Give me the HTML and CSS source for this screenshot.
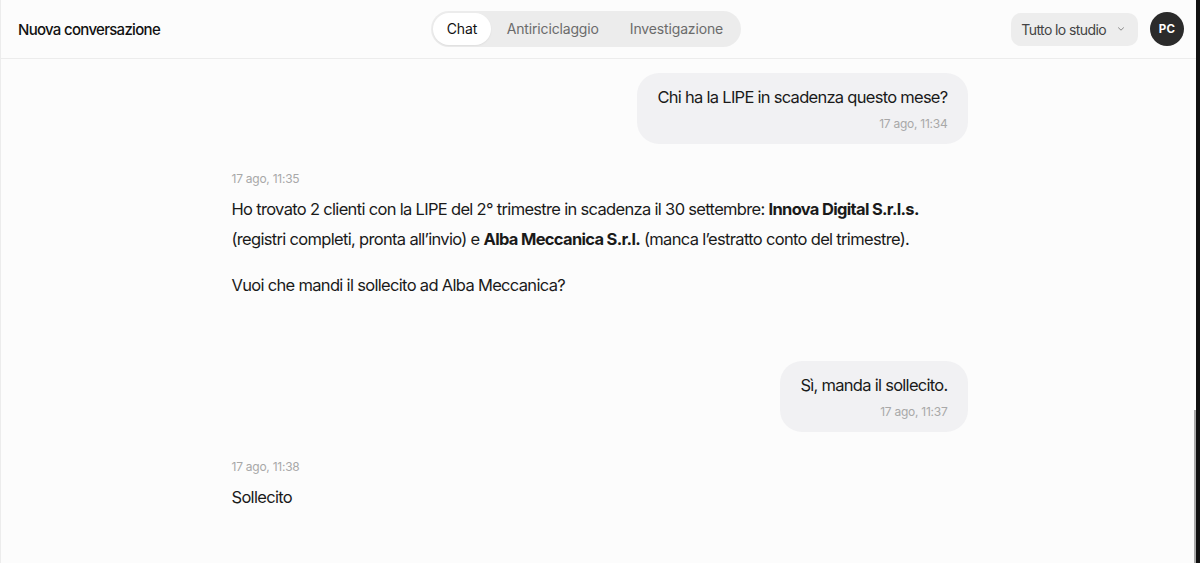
FILE: index.html
```html
<!DOCTYPE html>
<html lang="it">
<head>
<meta charset="utf-8">
<title>Nuova conversazione</title>
<link rel="stylesheet" href="styles.css">
</head>
<body>
<div class="app">
  <header class="topbar">
    <div class="title">Nuova conversazione</div>
    <nav class="tabs">
      <span class="tab active">Chat</span>
      <span class="tab">Antiriciclaggio</span>
      <span class="tab">Investigazione</span>
    </nav>
    <div class="controls">
      <div class="select">
        <span>Tutto lo studio</span>
        <svg class="chev" width="10" height="10" viewBox="0 0 10 10"><path d="M2.5 3.8 5 6.2 7.5 3.8" fill="none" stroke="#888" stroke-width="1" stroke-linecap="round" stroke-linejoin="round"/></svg>
      </div>
      <div class="avatar">PC</div>
    </div>
  </header>
  <main class="thread">
    <div class="column">
      <div class="msg-user">
        <div class="bubble">
          <p class="btext">Chi ha la LIPE in scadenza questo mese?</p>
          <div class="btime">17 ago, 11:34</div>
        </div>
      </div>
      <div class="msg-bot">
        <div class="time">17 ago, 11:35</div>
        <p class="para">Ho trovato 2 clienti con la LIPE del 2° trimestre in scadenza il 30 settembre: <b>Innova Digital S.r.l.s.</b> (registri completi, pronta all’invio) e <b>Alba Meccanica S.r.l.</b> (manca l’estratto conto del trimestre).</p>
        <p class="para">Vuoi che mandi il sollecito ad Alba Meccanica?</p>
      </div>
      <div class="msg-user second">
        <div class="bubble">
          <p class="btext">Sì, manda il sollecito.</p>
          <div class="btime">17 ago, 11:37</div>
        </div>
      </div>
      <div class="msg-bot">
        <div class="time">17 ago, 11:38</div>
        <p class="para">Sollecito</p>
      </div>
    </div>
  </main>
  <div class="thumb"></div>
</div>
<div class="edge"></div>
</body>
</html>
```
FILE: styles.css
```css
* { box-sizing: border-box; }
html, body { margin: 0; padding: 0; height: 100%; }
body {
  display: flex;
  background: #fcfcfc;
  font-family: "Inter", "Liberation Sans", sans-serif;
  color: #1a1a1a;
  overflow: hidden;
}
.app {
  position: relative;
  flex: 1;
  border-left: 1px solid #ececec;
  display: flex;
  flex-direction: column;
  min-width: 0;
}
.edge {
  width: 4px;
  background: #111;
  flex: none;
}
.thumb {
  position: absolute;
  right: 0;
  top: 410px;
  bottom: 0;
  width: 2px;
  background: #a9a9a9;
}
.topbar {
  height: 59px;
  flex: none;
  border-bottom: 1px solid #ececec;
  display: flex;
  align-items: center;
  justify-content: space-between;
  padding: 0 12px 0 17px;
}
.title {
  font-size: 15px;
  font-weight: 500;
  letter-spacing: -0.7px;
  color: #111;
}
.tabs {
  display: flex;
  background: #ececec;
  border-radius: 18px;
  padding: 2px;
  height: 36px;
  margin-top: -1px;
}
.tab {
  display: flex;
  align-items: center;
  padding: 0 15.5px;
  font-size: 14px;
  color: #6b6b6b;
  border-radius: 16px;
  letter-spacing: -0.15px;
}
.tab.active {
  background: #fff;
  color: #111;
  box-shadow: 0 1px 2px rgba(0,0,0,0.06);
  padding: 0 14px;
}
.controls {
  display: flex;
  align-items: center;
  gap: 12px;
}
.select {
  display: flex;
  align-items: center;
  gap: 10px;
  height: 33px;
  padding: 0 12px 0 10px;
  background: #ededed;
  border-radius: 10px;
  font-size: 14px;
  color: #444;
  letter-spacing: -0.6px;
}
.chev { display: block; }
.avatar {
  width: 34px;
  height: 34px;
  border-radius: 50%;
  background: #2b2b2b;
  color: #fff;
  font-size: 11.5px;
  font-weight: 700;
  display: flex;
  align-items: center;
  justify-content: center;
  letter-spacing: 0.2px;
}
.thread {
  flex: 1;
  overflow: hidden;
}
.column {
  width: 736px;
  margin: 0 auto;
  padding-top: 14px;
  transform: translateX(1px);
}
.msg-user {
  display: flex;
  justify-content: flex-end;
}
.msg-user.second { margin-top: 61px; }
.bubble {
  background: #f1f1f3;
  border-radius: 22px;
  padding: 13px 20px 12px 20px;
  text-align: right;
}
.btext {
  margin: 0;
  font-size: 16.5px;
  line-height: 22px;
  letter-spacing: -0.72px;
  color: #1a1a1a;
}
.btime {
  margin-top: 8px;
  font-size: 12px;
  line-height: 16px;
  color: #a8a8a8;
  letter-spacing: -0.25px;
}
.msg-bot { margin-top: 27px; }
.time {
  font-size: 12px;
  line-height: 16px;
  color: #a8a8a8;
  letter-spacing: -0.25px;
  margin-bottom: 7px;
}
.para {
  margin: 0 0 16px 0;
  font-size: 16.5px;
  line-height: 30px;
  letter-spacing: -0.68px;
  color: #1a1a1a;
}
.para b { font-weight: 700; }
```
